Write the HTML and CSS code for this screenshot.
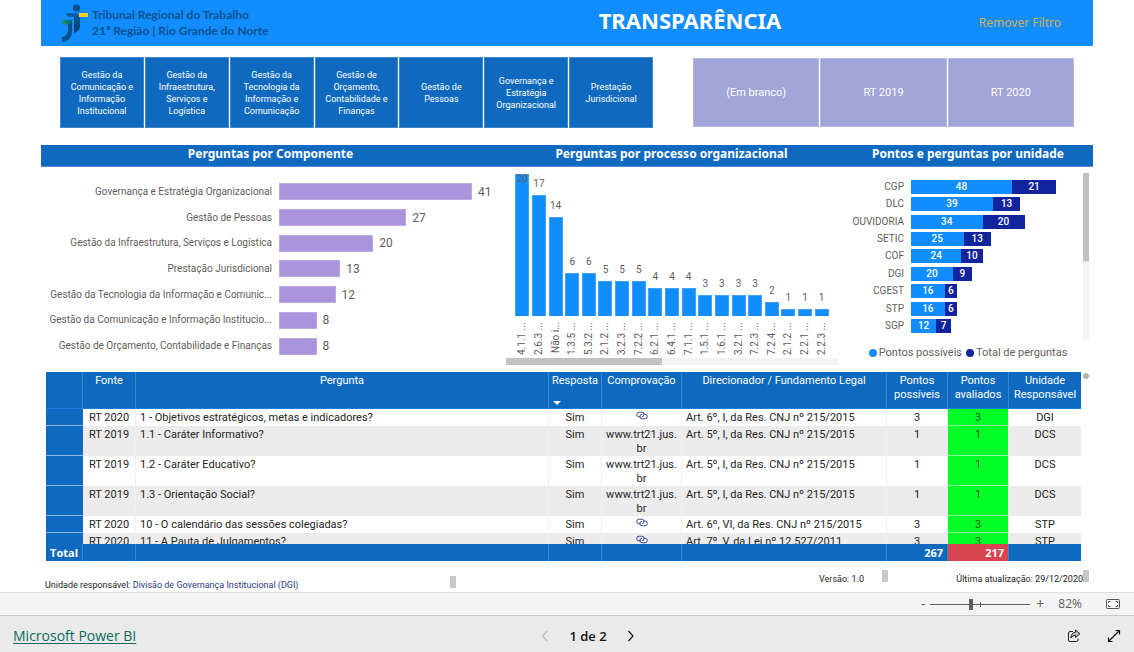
FILE: index.html
```html
<!DOCTYPE html>
<html lang="pt-BR">
<head>
<meta charset="utf-8">
<meta name="viewport" content="width=device-width, initial-scale=1">
<title>Transparência</title>
<link rel="stylesheet" href="styles.css">
</head>
<body>
<svg class="defs" aria-hidden="true">
  <symbol id="link" viewBox="0 0 12 9"><path d="M4.500 5.800H3A2.300 2.300 0 0 1 3 1.200H5.800A2.300 2.300 0 0 1 5.800 5.800M7.500 3.200H9A2.300 2.300 0 0 1 9 7.800H6.200A2.300 2.300 0 0 1 6.200 3.200" fill="none" stroke="#3a4a9c"/></symbol>
</svg>
<main class="report">
  <header class="banner">
    <div class="brand">
      <svg class="logo" viewBox="0 0 28 38" aria-hidden="true">
        <defs>
          <linearGradient id="g1" x1="0" y1="0" x2="0" y2="1"><stop offset="0" stop-color="#0a63ad"/><stop offset="1" stop-color="#084479"/></linearGradient>
          <linearGradient id="g2"><stop offset="0" stop-color="#12a06b"/><stop offset="1" stop-color="#0a5f79"/></linearGradient>
        </defs>
        <circle cx="14.500" cy="4" r="3.600" fill="#084f8c"/>
        <path d="M4 9H13Q18 9 18 14V22H12V13H8Q4 13 4 9Z" fill="url(#g1)"/>
        <path d="M17 9H26V13H17Z" fill="#ffcf2e"/>
        <path d="M0 16H10V20.500H0Z" fill="url(#g2)"/>
        <path d="M6 20H10V27Q10 37 0 38V33Q6 32 6 26Z" fill="#084f8c"/>
        <path d="M12 22H18Q18 27 12 29Z" fill="#084479"/>
      </svg>
      <p class="brand-text">Tribunal Regional do Trabalho<br>21ª Região | Rio Grande do Norte</p>
    </div>
    <h1>TRANSPARÊNCIA</h1>
    <button class="clear" type="button">Remover Filtro</button>
  </header>

  <section class="slicers">
    <div class="tiles areas">
      <button type="button">Gestão da Comunicação e Informação Institucional</button>
      <button type="button">Gestão da Infraestrutura, Serviços e Logística</button>
      <button type="button">Gestão da Tecnologia da Informação e Comunicação</button>
      <button type="button">Gestão de Orçamento, Contabilidade e Finanças</button>
      <button type="button">Gestão de Pessoas</button>
      <button type="button">Governança e Estratégia Organizacional</button>
      <button type="button">Prestação Jurisdicional</button>
    </div>
    <div class="tiles years">
      <button type="button">(Em branco)</button>
      <button type="button">RT 2019</button>
      <button type="button">RT 2020</button>
    </div>
  </section>

  <section class="charts">
    <article class="panel">
      <h2>Perguntas por Componente</h2>
      <ul class="hbars">
        <li><span class="name">Governança e Estratégia Organizacional</span><span class="track"><i style="width:87.7%"></i>41</span></li>
        <li><span class="name">Gestão de Pessoas</span><span class="track"><i style="width:57.8%"></i>27</span></li>
        <li><span class="name">Gestão da Infraestrutura, Serviços e Logística</span><span class="track"><i style="width:42.8%"></i>20</span></li>
        <li><span class="name">Prestação Jurisdicional</span><span class="track"><i style="width:27.8%"></i>13</span></li>
        <li><span class="name">Gestão da Tecnologia da Informação e Comunic...</span><span class="track"><i style="width:25.7%"></i>12</span></li>
        <li><span class="name">Gestão da Comunicação e Informação Institucio...</span><span class="track"><i style="width:17.1%"></i>8</span></li>
        <li><span class="name">Gestão de Orçamento, Contabilidade e Finanças</span><span class="track"><i style="width:17.1%"></i>8</span></li>
      </ul>
    </article>
    <article class="panel">
      <h2>Perguntas por processo organizacional</h2>
      <ul class="columns">
        <li class="full"><span class="col">20<i style="height:100%"></i></span><b>4.1.1 ...</b></li>
        <li><span class="col">17<i style="height:85%"></i></span><b>2.6.3 ...</b></li>
        <li><span class="col">14<i style="height:70%"></i></span><b>Não i...</b></li>
        <li><span class="col">6<i style="height:30%"></i></span><b>1.3.5 ...</b></li>
        <li><span class="col">6<i style="height:30%"></i></span><b>5.3.2 ...</b></li>
        <li><span class="col">5<i style="height:25%"></i></span><b>2.1.2 ...</b></li>
        <li><span class="col">5<i style="height:25%"></i></span><b>3.2.3 ...</b></li>
        <li><span class="col">5<i style="height:25%"></i></span><b>7.2.2 ...</b></li>
        <li><span class="col">4<i style="height:20%"></i></span><b>6.2.1 ...</b></li>
        <li><span class="col">4<i style="height:20%"></i></span><b>6.4.1 ...</b></li>
        <li><span class="col">4<i style="height:20%"></i></span><b>7.1.1 ...</b></li>
        <li><span class="col">3<i style="height:15%"></i></span><b>1.5.1 ...</b></li>
        <li><span class="col">3<i style="height:15%"></i></span><b>1.6.1 ...</b></li>
        <li><span class="col">3<i style="height:15%"></i></span><b>3.2.1 ...</b></li>
        <li><span class="col">3<i style="height:15%"></i></span><b>7.2.3 ...</b></li>
        <li><span class="col">2<i style="height:10%"></i></span><b>7.2.4 ...</b></li>
        <li><span class="col">1<i style="height:5%"></i></span><b>2.1.2 ...</b></li>
        <li><span class="col">1<i style="height:5%"></i></span><b>2.2.1 ...</b></li>
        <li><span class="col">1<i style="height:5%"></i></span><b>2.2.3 ...</b></li>
      </ul>
      <div class="hscroll"></div>
    </article>
    <article class="panel">
      <h2>Pontos e perguntas por unidade</h2>
      <div class="units">
        <ul class="stacked">
          <li><span class="name">CGP</span><span class="stack"><i style="width:59.4%">48</i><i style="width:26%">21</i></span></li>
          <li><span class="name">DLC</span><span class="stack"><i style="width:48.2%">39</i><i style="width:16.1%">13</i></span></li>
          <li><span class="name">OUVIDORIA</span><span class="stack"><i style="width:42.1%">34</i><i style="width:24.7%">20</i></span></li>
          <li><span class="name">SETIC</span><span class="stack"><i style="width:30.9%">25</i><i style="width:16.1%">13</i></span></li>
          <li><span class="name">COF</span><span class="stack"><i style="width:29.7%">24</i><i style="width:12.4%">10</i></span></li>
          <li><span class="name">DGI</span><span class="stack"><i style="width:24.7%">20</i><i style="width:11.1%">9</i></span></li>
          <li><span class="name">CGEST</span><span class="stack"><i style="width:19.8%">16</i><i style="width:7.4%">6</i></span></li>
          <li><span class="name">STP</span><span class="stack"><i style="width:19.8%">16</i><i style="width:7.4%">6</i></span></li>
          <li><span class="name">SGP</span><span class="stack"><i style="width:14.8%">12</i><i style="width:8.7%">7</i></span></li>
        </ul>
        <div class="vscroll"></div>
      </div>
      <p class="legend"><span>Pontos possíveis</span><span>Total de perguntas</span></p>
    </article>
  </section>

  <section class="grid-area">
    <div class="grid">
      <table>
        <colgroup><col class="c-mark"><col class="c-src"><col><col class="c-ans"><col class="c-proof"><col class="c-law"><col class="c-pts"><col class="c-pts"><col class="c-unit"></colgroup>
        <thead>
          <tr><th></th><th>Fonte</th><th>Pergunta</th><th class="sorted">Resposta</th><th>Comprovação</th><th>Direcionador / Fundamento Legal</th><th>Pontos possíveis</th><th>Pontos avaliados</th><th>Unidade Responsável</th></tr>
        </thead>
        <tbody>
          <tr><th></th><td>RT 2020</td><td>1 - Objetivos estratégicos, metas e indicadores?</td><td>Sim</td><td><a href="#" aria-label="Comprovação"><svg><use href="#link"/></svg></a></td><td>Art. 6º, I, da Res. CNJ nº 215/2015</td><td>3</td><td>3</td><td>DGI</td></tr>
          <tr><th></th><td>RT 2019</td><td>1.1 - Caráter Informativo?</td><td>Sim</td><td>www.trt21.jus.<br>br</td><td>Art. 5º, I, da Res. CNJ nº 215/2015</td><td>1</td><td>1</td><td>DCS</td></tr>
          <tr><th></th><td>RT 2019</td><td>1.2 - Caráter Educativo?</td><td>Sim</td><td>www.trt21.jus.<br>br</td><td>Art. 5º, I, da Res. CNJ nº 215/2015</td><td>1</td><td>1</td><td>DCS</td></tr>
          <tr><th></th><td>RT 2019</td><td>1.3 - Orientação Social?</td><td>Sim</td><td>www.trt21.jus.<br>br</td><td>Art. 5º, I, da Res. CNJ nº 215/2015</td><td>1</td><td>1</td><td>DCS</td></tr>
          <tr><th></th><td>RT 2020</td><td>10 - O calendário das sessões colegiadas?</td><td>Sim</td><td><a href="#" aria-label="Comprovação"><svg><use href="#link"/></svg></a></td><td>Art. 6º, VI, da Res. CNJ nº 215/2015</td><td>3</td><td>3</td><td>STP</td></tr>
          <tr><th></th><td>RT 2020</td><td>11 - A Pauta de Julgamentos?</td><td>Sim</td><td><a href="#" aria-label="Comprovação"><svg><use href="#link"/></svg></a></td><td>Art. 7º, V, da Lei nº 12.527/2011</td><td>3</td><td>3</td><td>STP</td></tr>
          <tr class="spacer"><th></th><td></td><td></td><td></td><td></td><td></td><td></td><td></td><td></td></tr>
        </tbody>
        <tfoot>
          <tr><th>Total</th><td></td><td></td><td></td><td></td><td></td><td>267</td><td>217</td><td></td></tr>
        </tfoot>
      </table>
    </div>
    <div class="knob"></div>
  </section>

  <footer class="notes">
    <p class="note owner"><span>Unidade responsável: <em>Divisão de Governança Institucional (DGI)</em></span></p>
    <p class="note version"><span>Versão: 1.0</span></p>
    <p class="note updated"><span>Última atualização: 29/12/2020</span></p>
  </footer>
</main>

<div class="zoombar">
  <button type="button" aria-label="Reduzir">-</button>
  <input type="range" min="0" max="100" value="40" aria-label="Zoom">
  <button type="button" aria-label="Ampliar">+</button>
  <output>82%</output>
  <button class="fit" type="button" aria-label="Ajustar à página"><svg viewBox="0 0 14 10"><g fill="none" stroke="#555"><rect x=".5" y=".5" width="13" height="9" rx="1"/><path d="M2.500 4V2.500H4.500M9.500 2.500H11.500V4M11.500 6V7.500H9.500M4.500 7.500H2.500V6"/></g></svg></button>
</div>
<nav class="appbar">
  <a href="#">Microsoft Power BI</a>
  <div class="pager">
    <button type="button" disabled aria-label="Página anterior"><svg viewBox="0 0 8 12"><path d="M6 1 1.500 6 6 11" fill="none" stroke="currentColor" stroke-width="1.200"/></svg></button>
    <span>1 de 2</span>
    <button type="button" aria-label="Próxima página"><svg viewBox="0 0 8 12"><path d="M1.500 1 6 6 1.500 11" fill="none" stroke="currentColor" stroke-width="1.200"/></svg></button>
  </div>
  <div class="actions">
    <button type="button" aria-label="Compartilhar"><svg viewBox="0 0 14 14"><g fill="none" stroke="#222" stroke-linejoin="round"><path d="M6 2.500H3Q1.500 2.500 1.500 4V11Q1.500 12.500 3 12.500H9.500Q11 12.500 11 11V9.500"/><path d="M8.500 1 13 4.800 8.500 8.500V6.300Q5.500 6.300 3.800 9Q4.200 3.700 8.500 3.200Z" fill="#bbb"/></g></svg></button>
    <button type="button" aria-label="Tela cheia"><svg viewBox="0 0 14 14"><path d="M8.500 1.500H12.500V5.500M12.500 1.500 1.500 12.500M1.500 8.500V12.500H5.500" fill="none" stroke="#111" stroke-width="1.200"/></svg></button>
  </div>
</nav>
</body>
</html>
```
FILE: styles.css
```css
:root {
  --blue: #0f6abf;
  --sky: #118dff;
  --navy: #12239e;
  --lilac: #ab94db;
  --grey: #5f5d5b;
}
* { box-sizing: border-box; }
body {
  margin: 0;
  min-height: 100vh;
  display: flex;
  flex-direction: column;
  background: #fff;
  color: #252423;
  font: 11px/14px Roboto, "Noto Sans", sans-serif;
}
h1, h2, p, ul { margin: 0; padding: 0; }
ul { list-style: none; }
i, b, em { font-style: normal; font-weight: 400; }
button { font: inherit; color: inherit; background: none; border: 0; padding: 0; cursor: pointer; }
.defs { position: absolute; width: 0; height: 0; }
.report { flex: 1; padding: 0 41px; }

.banner {
  display: grid;
  grid-template-columns: 459fr 380fr 213fr;
  align-items: center;
  height: 46px;
  background: var(--sky);
}
.brand { display: flex; align-items: center; gap: 2px; padding-left: 21px; }
.logo { width: 28px; height: 38px; }
.brand-text { color: #0b528f; font-family: Lato, sans-serif; font-size: 12px; line-height: 16px; font-weight: 700; white-space: nowrap; }
.banner h1 { color: #fff; font: 700 22px/24px "Noto Sans", sans-serif; text-align: center; padding-bottom: 6px; }
.clear { justify-self: end; margin-right: 32px; color: #d0b050; font: 12px/18px "Noto Sans", sans-serif; }

.slicers { display: flex; gap: 40px; padding: 11px 19px 17px; }
.tiles { display: grid; gap: 1px; }
.areas { flex: 593; grid-template-columns: repeat(7, 1fr); color: #fff; font-size: 9px; line-height: 12px; }
.areas button { height: 71px; padding: 0 7px; background: var(--blue); border: 1px solid #3c87cc; }
.years { flex: 381; grid-template-columns: repeat(3, 1fr); padding: 1px 0; color: #fff; font-size: 11px; }
.years button { background: #a1a5d8; border: 1px solid #b5b8e0; }

.charts { display: grid; grid-template-columns: 459fr 343fr 250fr; }
.panel { min-width: 0; }
.panel h2 {
  height: 22px;
  background: var(--blue);
  border-bottom: 1px solid #4a90d0;
  color: #fff;
  font: 700 12px/18px "Noto Sans", sans-serif;
  text-align: center;
}
.hbars { display: grid; grid-auto-rows: 1fr; height: 180px; margin-top: 12px; padding-right: 1px; color: var(--grey); }
.hbars li { display: grid; grid-template-columns: 231px 1fr; gap: 7px; align-items: center; }
.hbars .name { text-align: right; font-size: 10px; white-space: nowrap; }
.track { display: flex; align-items: center; gap: 6px; font-size: 12px; }
.track i { height: 17px; background: var(--lilac); border: 1px solid #bcaae3; }

.columns { display: grid; grid-template-columns: repeat(19, 1fr); margin: 7px 13px 6px 14px; color: var(--grey); font-size: 10px; }
.columns li { display: flex; flex-direction: column; align-items: center; gap: 6px; }
.col { display: flex; flex-direction: column; justify-content: flex-end; align-items: center; gap: 4px; width: 14px; height: 142px; line-height: 14px; }
.col i { flex: none; width: 100%; background: var(--sky); border: 1px solid #3fa3ff; border-bottom: 0; }
.full .col { position: relative; gap: 0; justify-content: flex-start; line-height: 10px; }
.full .col i { position: absolute; inset: 0; z-index: -1; }
.columns b { writing-mode: vertical-rl; transform: rotate(180deg); height: 30px; display: flex; justify-content: flex-end; white-space: nowrap; }
.hscroll { height: 7px; margin: 0 5px 0 6px; background: linear-gradient(#c2c2c2, #c2c2c2) 0 0 / 47% 100% no-repeat #f3f3f3; }

.units { display: flex; gap: 2px; padding: 6px 4px 0 2px; }
.stacked { flex: 1; display: grid; grid-auto-rows: 1fr; height: 157px; margin-top: 5px; }
.stacked li { display: grid; grid-template-columns: 59px 1fr; gap: 7px; align-items: center; }
.stacked .name { color: var(--grey); font-size: 10px; text-align: right; }
.stack { display: flex; font-size: 10px; font-weight: 500; line-height: 14px; color: #fff; text-align: center; }
.stack i { background: var(--sky); font-weight: inherit; }
.stack i + i { background: var(--navy); }
.vscroll { width: 6px; height: 167px; background: linear-gradient(#c2c2c2, #c2c2c2) 0 0 / 100% 53% no-repeat #f3f3f3; }
.legend { display: flex; justify-content: center; gap: 4px; margin-top: 6px; color: var(--grey); font-size: 11px; }
.legend span { display: flex; align-items: center; gap: 2px; }
.legend span::before { content: ""; width: 8px; height: 8px; border-radius: 50%; background: var(--sky); }
.legend span + span::before { background: var(--navy); }

.grid-area { display: flex; gap: 2px; padding: 7px 4px 0 5px; }
.grid { flex: 1; height: 189px; overflow: hidden; }
.knob { width: 6px; height: 6px; margin-top: 1px; border-radius: 50%; background: #b0b0b0; }
table { width: 100%; table-layout: fixed; border-collapse: separate; border-spacing: 0; }
.c-mark { width: 37px; }
.c-src { width: 53px; }
.c-ans { width: 53px; }
.c-proof { width: 80px; }
.c-law { width: 205px; }
.c-pts { width: 61px; }
.c-unit { width: 72px; }
th, td { padding: 2px 4px 0; text-align: center; vertical-align: top; font-weight: 400; white-space: nowrap; }
thead th { height: 37px; background: var(--blue); color: #fff; border-right: 1px solid #3c87cc; border-bottom: 1px solid #1a7cdb; white-space: normal; }
thead th, tfoot td, tfoot th { padding-left: 2px; padding-right: 2px; }
.sorted { position: relative; }
.sorted::after { content: ""; position: absolute; left: 4px; bottom: 3px; border: 4px solid transparent; border-top-color: #fff; border-bottom: 0; }
tbody td, tbody th { height: 17px; }
tbody td { border-right: 1px solid #f0f0f0; }
tbody tr:nth-child(even) td { background: #ececec; }
tbody tr th { background: var(--blue); border-bottom: 1px solid #8ab8e2; }
tbody td:nth-child(3), tbody td:nth-child(6) { text-align: left; }
tbody tr td:nth-child(8), tbody tr:nth-child(even) td:nth-child(8) { background: #00ff26; color: #1a5a20; border-bottom: 1px solid #8af59a; }
tbody svg { display: block; width: 12px; height: 9px; margin: 0 auto; }
tfoot td, tfoot th { position: sticky; bottom: 0; height: 17px; background: var(--blue); color: #fff; font-family: "Open Sans", sans-serif; font-weight: 700; border-right: 1px solid #3c87cc; }
tfoot th { text-align: right; }
tfoot td:nth-child(7) { text-align: right; }
tfoot td:nth-child(8) { text-align: right; background: #d64550; }
tfoot th, tfoot td { padding-right: 4px; }
thead th:last-child, tbody td:last-child, tfoot td:last-child { border-right: 0; }

.notes { display: grid; grid-template-columns: 780fr 69fr 203fr; align-items: start; padding: 9px 4px 0; font-size: 9px; line-height: 12px; }
.note { display: flex; white-space: nowrap; }
.note::after { content: ""; width: 6px; height: 12px; background: #c8c8c8; }
.note span { padding-top: 3px; }
.owner { width: 411px; padding-top: 6px; justify-content: space-between; }
.owner em { color: #2c3a80; }
.version { justify-content: space-between; }
.updated { justify-content: flex-end; }

.zoombar, .appbar { font-family: "Open Sans", "Noto Sans", sans-serif; }
.zoombar { display: flex; align-items: center; justify-content: flex-end; height: 24px; padding-right: 14px; background: #f4f4f4; border-top: 1px solid #e0e0e0; border-bottom: 1px solid #c8c8c8; color: #605e5c; font-size: 12px; }
.zoombar button { width: 14px; font-size: 14px; }
.zoombar input { appearance: none; width: 100px; height: 12px; margin: 0 3px 0 0; background: linear-gradient(#605e5c, #605e5c) 0 50% / 100% 1px no-repeat, linear-gradient(#605e5c, #605e5c) 50% 50% / 1px 5px no-repeat; }
.zoombar input::-webkit-slider-thumb { appearance: none; width: 4px; height: 11px; background: #605e5c; }
.zoombar output { margin: 0 24px 0 11px; }
.zoombar .fit svg { display: block; width: 14px; height: 10px; }
.appbar { display: grid; grid-template-columns: 1fr auto 1fr; align-items: center; height: 36px; padding: 3px 13px 0; background: #eaeaea; color: #111; line-height: 18px; }
.appbar a { color: #0b6a5e; font-size: 14px; text-underline-offset: 2px; justify-self: start; }
.pager { display: flex; align-items: center; gap: 20px; font-size: 13px; font-weight: 600; margin-left: 42px; }
.pager svg { display: block; width: 8px; height: 12px; }
.pager button:disabled { color: #bbb; }
.actions { display: flex; justify-content: flex-end; gap: 26px; }
.actions svg { display: block; width: 14px; height: 14px; }
```
